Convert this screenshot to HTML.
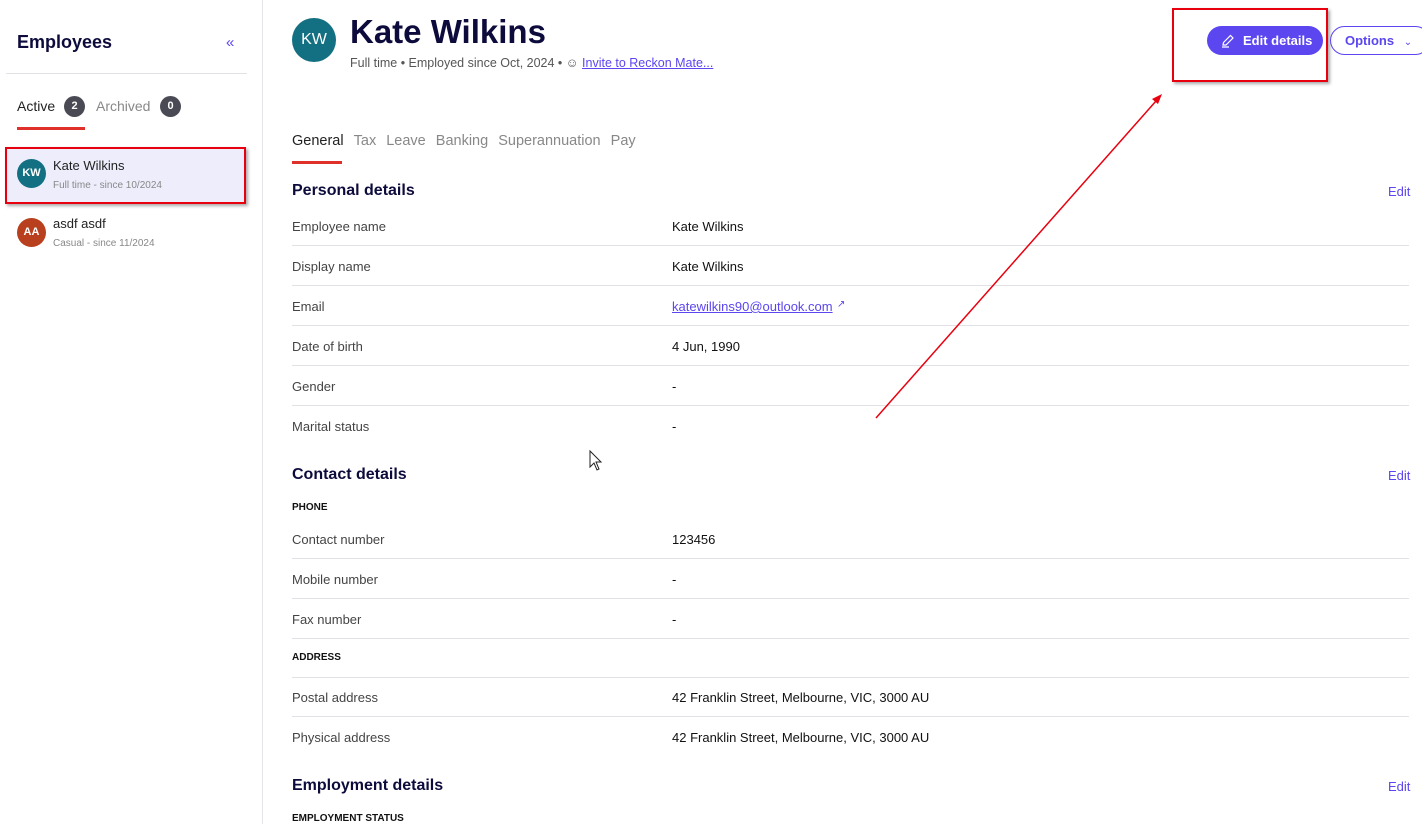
<!DOCTYPE html>
<html><head><style>
*{margin:0;padding:0;box-sizing:border-box}
body{width:1422px;height:824px;overflow:hidden;background:#fff;font-family:"Liberation Sans",sans-serif;color:#222;position:relative;font-size:13px}
.abs{position:absolute}
.side{position:absolute;left:0;top:0;width:263px;height:824px;border-right:1px solid #e4e4e8}
.row{position:absolute;left:292px;width:1117px;height:40px;border-bottom:1px solid #e2e2e6}
.row .l{position:absolute;left:0;top:13px;color:#444}
.row .v{position:absolute;left:380px;top:13px;color:#111}
h2{position:absolute;left:292px;font-size:16px;color:#0d0b3b;font-weight:bold}
.edit{position:absolute;left:1388px;color:#5b46f0;font-size:13px}
.cap{position:absolute;left:292px;font-size:10px;font-weight:bold;color:#111}
</style></head><body>
<div class="side">
<div class="abs" style="left:17px;top:32px;font-size:18px;font-weight:bold;color:#0d0b3b">Employees</div>
<div class="abs" style="left:226px;top:34px;color:#5b46f0;font-size:15px">«</div>
<div class="abs" style="left:6px;top:73px;width:241px;height:1px;background:#e2e2e6"></div>
<div class="abs" style="left:17px;top:98px;font-size:14px;color:#222">Active</div>
<div class="abs" style="left:64px;top:96px;width:21px;height:21px;border-radius:50%;background:#4a4a55;color:#fff;font-size:11px;font-weight:bold;text-align:center;line-height:21px">2</div>
<div class="abs" style="left:96px;top:98px;font-size:14px;color:#888">Archived</div>
<div class="abs" style="left:160px;top:96px;width:21px;height:21px;border-radius:50%;background:#4a4a55;color:#fff;font-size:11px;font-weight:bold;text-align:center;line-height:21px">0</div>
<div class="abs" style="left:17px;top:127px;width:68px;height:3px;background:#e0302a"></div>
<div class="abs" style="left:5px;top:147px;width:241px;height:57px;background:#ededfc;border:2px solid #e8000f;box-shadow:2px 2px 3px #aaa"></div>
<div class="abs" style="left:17px;top:159px;width:29px;height:29px;border-radius:50%;background:#137083;color:#fff;font-size:11px;font-weight:bold;text-align:center;line-height:29px">KW</div>
<div class="abs" style="left:53px;top:158px;font-size:13px;color:#222">Kate Wilkins</div>
<div class="abs" style="left:53px;top:180px;font-size:10px;color:#888">Full time - since 10/2024</div>
<div class="abs" style="left:17px;top:218px;width:29px;height:29px;border-radius:50%;background:#b8401e;color:#fff;font-size:11px;font-weight:bold;text-align:center;line-height:29px">AA</div>
<div class="abs" style="left:53px;top:216px;font-size:13px;color:#222">asdf asdf</div>
<div class="abs" style="left:53px;top:238px;font-size:10px;color:#888">Casual - since 11/2024</div>
</div>

<div class="abs" style="left:292px;top:18px;width:44px;height:44px;border-radius:50%;background:#137083;color:#fff;font-size:16px;text-align:center;line-height:44px">KW</div>
<div class="abs" style="left:350px;top:13px;font-size:33px;font-weight:bold;color:#0d0b3b">Kate Wilkins</div>
<div class="abs" style="left:350px;top:56px;font-size:12.5px;color:#555">Full time • Employed since Oct, 2024 • ☺ <span style="color:#5b46f0;text-decoration:underline">Invite to Reckon Mate...</span></div>

<div class="abs" style="left:1172px;top:8px;width:156px;height:74px;border:2px solid #e8000f;box-shadow:2px 2px 3px #aaa"></div>
<div class="abs" style="left:1207px;top:26px;width:116px;height:29px;border-radius:15px;background:#5b46f0;color:#fff;font-size:13px;font-weight:bold;line-height:29px;padding-left:36px">Edit details</div>
<svg class="abs" style="left:1220px;top:33px" width="16" height="16" viewBox="0 0 16 16"><path d="M3 12 L3.5 9.5 L10.5 2.5 L13 5 L6 12 Z M2 14 H9" fill="none" stroke="#fff" stroke-width="1.2"/></svg>
<div class="abs" style="left:1330px;top:26px;width:100px;height:29px;border-radius:15px;border:1px solid #5b46f0;color:#5b46f0;font-size:13px;font-weight:bold;line-height:27px;padding-left:14px">Options <span style="font-weight:normal;font-size:10px;margin-left:6px">⌄</span></div>

<div class="abs" style="left:292px;top:133px;font-size:14.5px;color:#222;word-spacing:2px">General <span style="color:#888;margin-left:4px">Tax</span> <span style="color:#888;margin-left:4px">Leave</span> <span style="color:#888;margin-left:4px">Banking</span> <span style="color:#888;margin-left:4px">Superannuation</span> <span style="color:#888;margin-left:4px">Pay</span></div>
<div class="abs" style="left:292px;top:161px;width:50px;height:3px;background:#e0302a"></div>

<h2 style="top:182px">Personal details</h2><div class="edit" style="top:184px">Edit</div>
<div class="row" style="top:206px"><span class="l">Employee name</span><span class="v">Kate Wilkins</span></div>
<div class="row" style="top:246px"><span class="l">Display name</span><span class="v">Kate Wilkins</span></div>
<div class="row" style="top:286px"><span class="l">Email</span><span class="v" style="color:#5b46f0;text-decoration:underline">katewilkins90@outlook.com</span><span class="v" style="left:545px;color:#5b46f0;font-size:10px">↗</span></div>
<div class="row" style="top:326px"><span class="l">Date of birth</span><span class="v">4 Jun, 1990</span></div>
<div class="row" style="top:366px"><span class="l">Gender</span><span class="v">-</span></div>
<div class="row" style="top:406px;border:none"><span class="l">Marital status</span><span class="v">-</span></div>

<h2 style="top:466px">Contact details</h2><div class="edit" style="top:468px">Edit</div>
<div class="cap" style="top:502px">PHONE</div>
<div class="row" style="top:519px"><span class="l">Contact number</span><span class="v">123456</span></div>
<div class="row" style="top:559px"><span class="l">Mobile number</span><span class="v">-</span></div>
<div class="row" style="top:599px"><span class="l">Fax number</span><span class="v">-</span></div>
<div class="cap" style="top:652px">ADDRESS</div>
<div class="row" style="top:677px;border-top:1px solid #e2e2e6;height:40px"><span class="l" style="top:12px">Postal address</span><span class="v" style="top:12px">42 Franklin Street, Melbourne, VIC, 3000 AU</span></div>
<div class="row" style="top:717px;border:none"><span class="l">Physical address</span><span class="v">42 Franklin Street, Melbourne, VIC, 3000 AU</span></div>

<h2 style="top:777px">Employment details</h2><div class="edit" style="top:779px">Edit</div>
<div class="cap" style="top:813px">EMPLOYMENT STATUS</div>

<svg class="abs" style="left:0;top:0" width="1422" height="824"><line x1="876" y1="418" x2="1156" y2="101" stroke="#e8000f" stroke-width="1.5"/><path d="M1162 94 L1152 99 L1158 104 Z" fill="#e8000f"/>
<path d="M590 451 L590 467 L594 463 L597 470 L599 469 L596 462 L601 462 Z" fill="#fff" stroke="#222" stroke-width="1"/></svg>
</body></html>
